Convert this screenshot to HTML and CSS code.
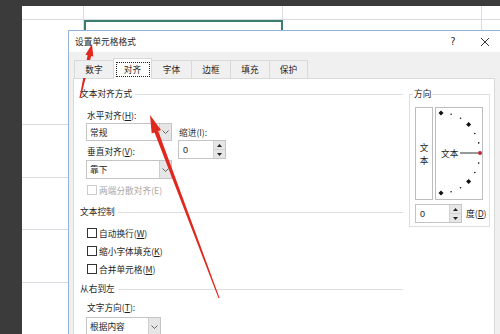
FILE: index.html
```html
<!DOCTYPE html>
<html lang="zh">
<head>
<meta charset="utf-8">
<link rel="stylesheet" href="styles.css">
</head>
<body>
<div class="screen">
  <div class="sheet">
    <div class="cell"></div><div class="cell"></div><div class="cell"></div><div class="cell"></div>
    <div class="cell"></div><div class="cell sel"></div><div class="cell"></div><div class="cell"></div>
    <div class="cell"></div><div class="cell"></div><div class="cell"></div><div class="cell"></div>
    <div class="cell"></div><div class="cell"></div><div class="cell"></div><div class="cell"></div>
    <div class="cell"></div><div class="cell"></div><div class="cell"></div><div class="cell"></div>
    <div class="cell"></div><div class="cell"></div><div class="cell"></div><div class="cell"></div>
  </div>

  <div class="dialog">
    <div class="titlebar">
      <span class="title">设置单元格格式</span>
      <span class="ctl help">?</span>
      <span class="ctl close"><svg width="10" height="10" viewBox="0 0 10 10"><path d="M1 1L9 9M9 1L1 9" stroke="#333" stroke-width="1" fill="none"/></svg></span>
    </div>
    <div class="body">
      <div class="tabs">
        <div class="tab">数字</div>
        <div class="tab active"><span class="focus">对齐</span></div>
        <div class="tab">字体</div>
        <div class="tab">边框</div>
        <div class="tab">填充</div>
        <div class="tab">保护</div>
      </div>
      <div class="panel">
        <div class="left">
          <div class="sec">文本对齐方式</div>
          <div class="grp">
            <div class="align-row">
              <div class="ac">
                <div class="lbl">水平对齐(<u>H</u>):</div>
                <div class="combo"><span class="val">常规</span><span class="btn"><svg width="7" height="4" viewBox="0 0 7 4"><path d="M0.5 0.5L3.5 3.5L6.5 0.5" stroke="#666" fill="none"/></svg></span></div>
                <div class="lbl mt4">垂直对齐(<u>V</u>):</div>
                <div class="combo tall mt1"><span class="val">靠下</span><span class="btn"><svg width="7" height="4" viewBox="0 0 7 4"><path d="M0.5 0.5L3.5 3.5L6.5 0.5" stroke="#666" fill="none"/></svg></span></div>
              </div>
              <div class="ic">
                <div class="lbl muted-lbl">缩进(I):</div>
                <div class="spin"><span class="val">0</span><span class="sbtns"><span class="sb"><svg width="5" height="3" viewBox="0 0 5 3"><path d="M0 3L2.5 0L5 3Z" fill="#222"/></svg></span><span class="sb"><svg width="5" height="3" viewBox="0 0 5 3"><path d="M0 0L2.5 3L5 0Z" fill="#222"/></svg></span></span></div>
              </div>
            </div>
            <div class="chk disabled mt4"><span class="box"></span><span>两端分散对齐(E)</span></div>
          </div>
          <div class="sec mt8">文本控制</div>
          <div class="grp">
            <div class="chk row18 mt5"><span class="box"></span><span>自动换行(<u>W</u>)</span></div>
            <div class="chk row18"><span class="box"></span><span>缩小字体填充(<u>K</u>)</span></div>
            <div class="chk row18"><span class="box"></span><span>合并单元格(<u>M</u>)</span></div>
          </div>
          <div class="sec mt4">从右到左</div>
          <div class="grp">
            <div class="lbl mt5">文字方向(<u>T</u>):</div>
            <div class="combo tall narrow mt2"><span class="val">根据内容</span><span class="btn"><svg width="7" height="4" viewBox="0 0 7 4"><path d="M0.5 0.5L3.5 3.5L6.5 0.5" stroke="#666" fill="none"/></svg></span></div>
          </div>
        </div>
        <fieldset class="orient">
          <legend>方向</legend>
          <div class="orow">
            <div class="vbox"><span>文</span><span>本</span></div>
            <div class="dial">
              <svg class="dial-svg" width="46" height="91" viewBox="0 0 46 91">
                <g fill="#111">
                  <path d="M5 2.5L7.5 5L5 7.5L2.5 5Z"/>
                  <circle cx="15.1" cy="6.3" r="0.8"/>
                  <circle cx="24.5" cy="10.2" r="0.8"/>
                  <path d="M32.6 13.9L35.1 16.4L32.6 18.9L30.1 16.4Z"/>
                  <circle cx="38.8" cy="25.5" r="0.8"/>
                  <circle cx="42.7" cy="34.9" r="0.8"/>
                  <circle cx="42.7" cy="55.1" r="0.8"/>
                  <circle cx="38.8" cy="64.5" r="0.8"/>
                  <path d="M32.6 71.1L35.1 73.6L32.6 76.1L30.1 73.6Z"/>
                  <circle cx="24.5" cy="79.8" r="0.8"/>
                  <circle cx="15.1" cy="83.7" r="0.8"/>
                  <path d="M5 82.5L7.5 85L5 87.5L2.5 85Z"/>
                </g>
                <text x="5" y="48.5" class="dial-text">文本</text>
                <line x1="24" y1="45" x2="42" y2="45" stroke="#333" stroke-width="1"/>
                <circle cx="44" cy="45" r="2" fill="#c0263a"/>
              </svg>
            </div>
          </div>
          <div class="deg-row">
            <div class="spin small"><span class="val">0</span><span class="sbtns"><span class="sb"><svg width="5" height="3" viewBox="0 0 5 3"><path d="M0 3L2.5 0L5 3Z" fill="#222"/></svg></span><span class="sb"><svg width="5" height="3" viewBox="0 0 5 3"><path d="M0 0L2.5 3L5 0Z" fill="#222"/></svg></span></span></div>
            <span class="deg">度(<u>D</u>)</span>
          </div>
        </fieldset>
      </div>
    </div>
  </div>

  <svg class="arrows" width="500" height="334" viewBox="0 0 500 334">
    <polygon fill="#e0281f" points="92,44 93.3,56.6 91.2,56.1 80.6,98.1 79.4,97.9 87.6,55.3 85.5,54.8"/>
    <polygon fill="#e0281f" points="150,115 161.0,130.1 158.2,131.1 219.5,297.8 218.5,298.2 154.5,132.6 151.7,133.6"/>
  </svg>
</div>
</body>
</html>
```

FILE: styles.css
```css
* { box-sizing: border-box; }

body {
  margin: 0;
  width: 500px;
  height: 334px;
  overflow: hidden;
  background: #3b3b3b;
  font-family: "Noto Sans CJK SC", "Microsoft YaHei", sans-serif;
  font-size: 8.7px;
  color: #1e1e1e;
}

.screen {
  position: relative;
  width: 500px;
  height: 334px;
  padding: 6px 0 0 22px;
  overflow: hidden;
}

.sheet {
  display: grid;
  grid-template-columns: 62px 199px 199px 40px;
  grid-template-rows: 14px 105px 53px 52px 53px 60px;
  width: 478px;
  height: 328px;
  background: #fff;
}

.cell {
  border-right: 1px solid #d9dce0;
  border-bottom: 1px solid #d9dce0;
}

.cell.sel {
  border: 2px solid #3b7d6e;
}

.dialog {
  position: absolute;
  left: 68px;
  top: 30px;
  width: 434px;
  height: 310px;
  background: #f0f0f0;
  border: 1px solid #93b3d6;
}

.titlebar {
  height: 21px;
  background: #fff;
  display: flex;
  align-items: center;
  padding-left: 6px;
}

.title { flex: 1; }

.ctl {
  width: 32px;
  height: 21px;
  display: flex;
  align-items: center;
  justify-content: center;
  color: #333;
}

.help { font-size: 10px; font-family: "DejaVu Sans", sans-serif; }

.body {
  padding: 6px 6px 0 4px;
}

.tabs {
  display: flex;
  align-items: flex-end;
  height: 21px;
  margin-left: 1px;
  margin-bottom: -1px;
  position: relative;
  z-index: 1;
}

.tab {
  width: 39px;
  height: 18px;
  margin-bottom: 1px;
  border: 1px solid #d9d9d9;
  border-bottom: none;
  border-right: none;
  background: #f0f0f0;
  display: flex;
  align-items: center;
  justify-content: center;
}

.tab:last-child { border-right: 1px solid #d9d9d9; }

.tab.active {
  height: 21px;
  margin-bottom: 0;
  background: #fff;
  border-right: 1px solid #d9d9d9;
}

.tab.active + .tab { border-left: none; }

.focus {
  display: flex;
  align-items: center;
  justify-content: center;
  width: 34px;
  height: 15px;
  margin-top: 1px;
  border: 1px dotted #222;
}

.panel {
  display: flex;
  align-items: flex-start;
  height: 262px;
  background: #fff;
  border: 1px solid #d9d9d9;
  padding: 8px 0 0 6px;
}

.left { width: 323px; }

.sec {
  display: flex;
  align-items: center;
  height: 14px;
  line-height: 14px;
}

.sec::after {
  content: "";
  flex: 1;
  border-top: 1px solid #dedede;
  margin-left: 3px;
}

.grp { padding-left: 6px; }

.align-row { display: flex; margin-top: 8px; }

.ac { width: 86px; }

.ic { margin-left: 6px; }

.lbl {
  height: 14px;
  line-height: 14px;
  padding-left: 1px;
  white-space: nowrap;
}

.muted-lbl { margin-top: 17px; color: #333; }

.mt1 { margin-top: 1px; }
.mt2 { margin-top: 2px; }
.mt4 { margin-top: 4px; }
.mt5 { margin-top: 5px; }
.mt8 { margin-top: 8px; }

.combo {
  display: flex;
  height: 18px;
  border: 1px solid #c4c4c4;
  background: #fff;
}

.combo.tall { height: 19px; }
.combo.narrow { width: 75px; }

.combo .val {
  flex: 1;
  padding-left: 3px;
  display: flex;
  align-items: center;
}

.combo .btn {
  width: 12px;
  background: #e6e6e6;
  border-left: 1px solid #cfcfcf;
  display: flex;
  align-items: center;
  justify-content: center;
}

.spin {
  display: flex;
  width: 48px;
  height: 19px;
  border: 1px solid #c4c4c4;
  background: #fff;
}

.spin.small { width: 47px; }

.spin .val {
  flex: 1;
  padding-left: 4px;
  display: flex;
  align-items: center;
  font-family: "Liberation Sans", sans-serif;
  font-size: 9px;
}

.sbtns {
  width: 12px;
  display: flex;
  flex-direction: column;
  background: #e6e6e6;
  border-left: 1px solid #d3d3d3;
}

.sb {
  flex: 1;
  display: flex;
  align-items: center;
  justify-content: center;
}

.sb + .sb { border-top: 1px solid #d3d3d3; }

.chk {
  display: flex;
  align-items: center;
  gap: 2px;
  height: 14px;
  padding-left: 1px;
  white-space: nowrap;
}

.chk.row18 { height: 18px; }

.chk .box {
  width: 10px;
  height: 10px;
  border: 1px solid #333;
  background: #fff;
}

.chk.disabled { color: #a8a8a8; }
.chk.disabled .box { border-color: #cccccc; }

.orient {
  margin: 0 0 0 6px;
  width: 81px;
  height: 140px;
  min-width: 0;
  padding: 6px 0 0 5px;
  border: 1px solid #dedede;
}

.orient legend {
  padding: 0 1px;
  margin-left: -2px;
  height: 14px;
  line-height: 14px;
}

.orow { display: flex; gap: 2px; }

.vbox {
  width: 18px;
  height: 93px;
  border: 1px solid #bdbdbd;
  display: flex;
  flex-direction: column;
  align-items: center;
  justify-content: center;
  line-height: 13px;
}

.dial {
  width: 48px;
  height: 93px;
  border: 1px solid #bdbdbd;
}

.dial-svg { display: block; overflow: visible; }

.dial-text {
  font-family: "Noto Sans CJK SC", sans-serif;
  font-size: 8.7px;
  fill: #1e1e1e;
}

.deg-row {
  display: flex;
  align-items: center;
  margin-top: 4px;
}

.deg { margin-left: 4px; white-space: nowrap; }

.arrows {
  position: absolute;
  left: 0;
  top: 0;
  pointer-events: none;
}
```
